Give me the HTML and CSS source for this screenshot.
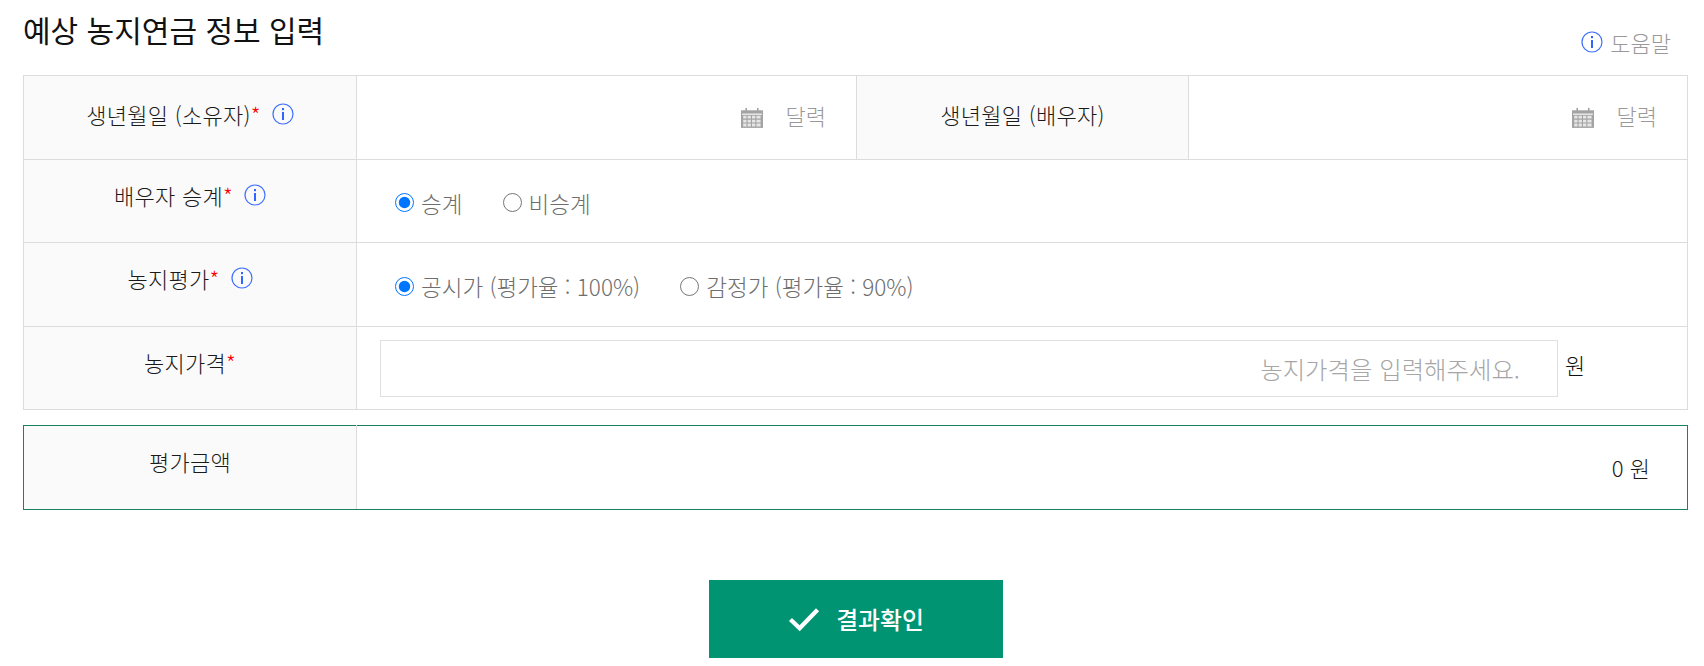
FILE: index.html
```html
<!DOCTYPE html>
<html lang="ko">
<head>
    <meta charset="UTF-8">
    <title>예상 농지연금 정보 입력</title>
    <link rel="stylesheet" href="styles.css">
</head>
<body>
    <svg class="icon-defs" width="0" height="0" aria-hidden="true">
        <symbol id="info" viewBox="0 0 22 22">
            <circle cx="11" cy="11" r="10" fill="none" stroke="#3f6fff" stroke-width="1.2"/>
            <rect x="10" y="9" width="2" height="8" fill="#2f66ff"/>
            <rect x="10" y="5" width="2" height="2.2" fill="#2f66ff"/>
        </symbol>
        <symbol id="calendar" viewBox="0 0 20 18">
            <path d="M0 2h20v16H0z" fill="#a3a3a3"/>
            <path d="M1 5h18v1H1z" fill="#fff"/>
            <path d="M4 0h1.500v3.500H4zM14.500 0H16v3.500h-1.500z" fill="#a3a3a3"/>
            <path d="M2 7h3v2.500H2zM6 7h3v2.500H6zM10 7h3v2.500h-3zM14 7h3.800v2.500H14zM2 10.500h3V13H2zM6 10.500h3V13H6zM10 10.500h3V13h-3zM14 10.500h3.800V13H14zM2 14h3v2.800H2zM6 14h3v2.800H6zM10 14h3v2.800h-3zM14 14h3.800v2.800H14z" fill="#e6e6e6"/>
        </symbol>
    </svg>

    <div class="wrap">
        <div class="title-row">
            <h2>예상 농지연금 정보 입력</h2>
            <a class="help"><svg class="info"><use href="#info"/></svg>도움말</a>
        </div>

        <table class="form-table">
            <colgroup>
                <col class="col-th"><col class="col-td"><col class="col-th2"><col>
            </colgroup>
            <tr>
                <th><span class="label first">생년월일 (소유자)<em>*</em><svg class="info"><use href="#info"/></svg></span></th>
                <td class="date-cell">
                    <svg class="cal"><use href="#calendar"/></svg><span class="cal-text">달력</span>
                </td>
                <th><span class="label first">생년월일 (배우자)</span></th>
                <td class="date-cell">
                    <svg class="cal"><use href="#calendar"/></svg><span class="cal-text">달력</span>
                </td>
            </tr>
            <tr>
                <th><span class="label">배우자 승계<em>*</em><svg class="info"><use href="#info"/></svg></span></th>
                <td colspan="3" class="radio-cell">
                    <label class="radio"><input type="radio" name="succ" checked>승계</label>
                    <label class="radio"><input type="radio" name="succ">비승계</label>
                </td>
            </tr>
            <tr>
                <th><span class="label">농지평가<em>*</em><svg class="info"><use href="#info"/></svg></span></th>
                <td colspan="3" class="radio-cell">
                    <label class="radio"><input type="radio" name="eval" checked>공시가 (평가율 : 100%)</label>
                    <label class="radio"><input type="radio" name="eval">감정가 (평가율 : 90%)</label>
                </td>
            </tr>
            <tr>
                <th><span class="label">농지가격<em>*</em></span></th>
                <td colspan="3" class="price-cell">
                    <input class="price" type="text" placeholder="농지가격을 입력해주세요."><span class="unit">원</span>
                </td>
            </tr>
        </table>

        <table class="form-table result">
            <colgroup>
                <col class="col-th"><col>
            </colgroup>
            <tr>
                <th><span class="label">평가금액</span></th>
                <td class="amount">0 원</td>
            </tr>
        </table>

        <div class="btn-row">
            <button class="btn-result">
                <svg class="check" viewBox="0 0 30 24"><path d="M2.500 12.500 11 20.500 27.500 3.500" fill="none" stroke="#fff" stroke-width="4"/></svg>결과확인
            </button>
        </div>
    </div>
</body>
</html>
```
FILE: styles.css
```css
* {
    box-sizing: border-box;
}
body {
    margin: 0;
    background: #fff;
    font-family: "Noto Sans CJK KR", "Noto Sans", sans-serif;
    font-size: 22px;
    font-weight: 300;
    color: #1a1a1a;
}
.icon-defs {
    position: absolute;
}
.wrap {
    padding: 0 16px 0 23px;
}
.title-row {
    display: flex;
    justify-content: space-between;
    align-items: flex-end;
    height: 75px;
    padding-bottom: 21px;
}
.title-row h2 {
    margin: 0 0 8px;
    font-size: 30px;
    font-weight: 400;
    line-height: 34px;
    color: #111;
}
.help {
    display: flex;
    align-items: center;
    gap: 7px;
    margin-right: 17px;
    font-size: 22px;
    line-height: 24px;
    color: #999;
}
.info {
    width: 22px;
    height: 22px;
}
.form-table {
    width: 100%;
    table-layout: fixed;
    border-collapse: collapse;
    border: 1px solid #dcdcdc;
}
.col-th {
    width: 333px;
}
.col-td {
    width: 500px;
}
.col-th2 {
    width: 332px;
}
.form-table th,
.form-table td {
    height: 83.500px;
    padding: 0;
    border: 1px solid #dcdcdc;
}
.form-table th {
    background: #fafafa;
    font-weight: 300;
    vertical-align: top;
    padding-top: 19px;
}
.label {
    display: inline-flex;
    align-items: center;
    line-height: 32px;
    letter-spacing: 0.3px;
    color: #1a1a1a;
}
.label.first {
    margin-top: 3px;
}
.label em {
    font-style: normal;
    color: #f00;
    align-self: flex-start;
}
.label .info {
    margin-left: 11px;
}
.date-cell {
    text-align: right;
    padding: 0 30px 4px 0 !important;
    color: #999;
}
.cal {
    width: 22px;
    height: 20px;
    margin-right: 23px;
    vertical-align: -3px;
}
.radio-cell {
    padding: 3px 0 0 38px !important;
}
.radio {
    display: inline-flex;
    align-items: center;
    margin-right: 34px;
    font-size: 22.500px;
    color: #6e6e6e;
}
.radio input {
    width: 19px;
    height: 19px;
    margin: 0 7px 0 0;
}
.price-cell {
    padding: 1px 0 0 23px !important;
}
.price {
    width: 1178px;
    height: 57px;
    padding: 0 37px 0 10px;
    border: 1px solid #e0e0e0;
    font: inherit;
    font-size: 24.400px;
    text-align: right;
    vertical-align: middle;
    outline: none;
}
.price::placeholder {
    color: #a6a6a6;
}
.unit {
    margin-left: 7px;
    color: #111;
}
.result {
    margin-top: 15px;
    border: 1px solid #1a8060;
}
.result tr > * {
    border-top-color: #1a8060;
    border-bottom-color: #1a8060;
}
.result tr > :first-child {
    border-left-color: #1a8060;
}
.result tr > :last-child {
    border-right-color: #1a8060;
}
.amount {
    text-align: right;
    padding-right: 37px !important;
    color: #1a1a1a;
}
.btn-row {
    display: flex;
    justify-content: center;
    margin-top: 70px;
}
.btn-result {
    display: flex;
    align-items: center;
    justify-content: center;
    gap: 15px;
    width: 294px;
    height: 78px;
    border: none;
    background: #009473;
    color: #fff;
    font: inherit;
    font-weight: 500;
    font-size: 23.800px;
}
.check {
    width: 34px;
    height: 26px;
}
```
